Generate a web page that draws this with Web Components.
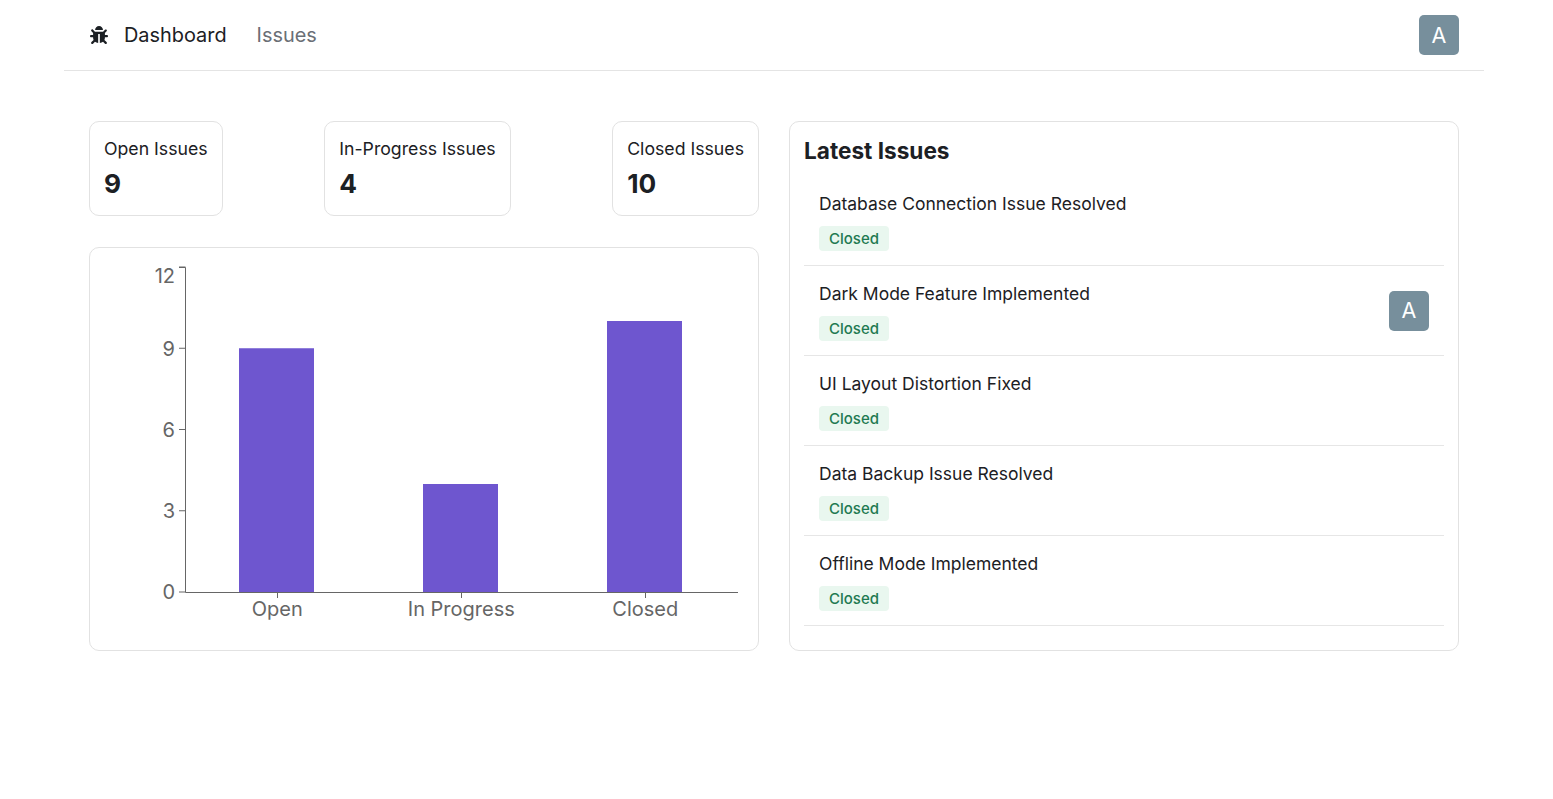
<!DOCTYPE html>
<html lang="en">
<head>
<meta charset="utf-8">
<title>Issue Tracker</title>
<style>
  html, body { margin: 0; background: #fff; }
  body { font-family: Inter, "Liberation Sans", sans-serif; color: #1c2024; }
</style>
</head>
<body>
<issue-nav></issue-nav>
<issue-dashboard>
  <stat-row slot="left">
    <stat-card label="Open Issues" value="9"></stat-card>
    <stat-card label="In-Progress Issues" value="4"></stat-card>
    <stat-card label="Closed Issues" value="10"></stat-card>
  </stat-row>
  <issue-chart slot="left"></issue-chart>
  <latest-issues slot="right">
    <issue-row title="Database Connection Issue Resolved"></issue-row>
    <issue-row title="Dark Mode Feature Implemented" assigned></issue-row>
    <issue-row title="UI Layout Distortion Fixed"></issue-row>
    <issue-row title="Data Backup Issue Resolved"></issue-row>
    <issue-row title="Offline Mode Implemented"></issue-row>
  </latest-issues>
</issue-dashboard>

<script>
// Small helper so every element gets an open shadow root from a string
function shadow(el, html) {
  el.attachShadow({ mode: 'open' }).innerHTML = html;
}

class UserAvatar extends HTMLElement {
  connectedCallback() {
    shadow(this, `
      <style>
        :host {
          display: flex; align-items: center; justify-content: center;
          box-sizing: border-box; padding-top: 1px;
          width: 40px; height: 40px; flex: none;
          border-radius: 5px;
          background: #778f9c; color: #fff;
          font-size: 21.5px; line-height: 1;
        }
      </style>
      <span>${this.getAttribute('letter') || 'A'}</span>`);
  }
}

class IssueNav extends HTMLElement {
  connectedCallback() {
    shadow(this, `
      <style>
        :host {
          display: flex; align-items: center; justify-content: space-between;
          box-sizing: border-box;
          width: 1420px; height: 71px;
          margin-left: 64px; padding: 0 25px;
          border-bottom: 1px solid #e4e4e4;
        }
        .links { display: flex; align-items: center; }
        svg { width: 18px; height: 18px; color: #1c2024; margin: 0 16px 0 1px; }
        a { font-size: 19.9px; line-height: 28px; text-decoration: none; color: #1c2024; }
        a + a { margin-left: 30px; color: #6b6f76; }
      </style>
      <div class="links">
        <svg viewBox="0 0 512 512" fill="currentColor"><path d="M511.988 288.9c-.478 17.43-15.217 31.1-32.653 31.1H424v16c0 21.864-4.882 42.584-13.6 61.145l60.228 60.228c12.496 12.497 12.496 32.758 0 45.255-12.498 12.497-32.759 12.496-45.256 0l-54.736-54.736C345.886 467.965 314.351 480 280 480V236c0-6.627-5.373-12-12-12h-24c-6.627 0-12 5.373-12 12v244c-34.351 0-65.886-12.035-90.636-32.108l-54.736 54.736c-12.498 12.497-32.759 12.496-45.256 0-12.496-12.497-12.496-32.758 0-45.255l60.228-60.228C92.882 378.584 88 357.864 88 336v-16H32.666C15.23 320 .491 306.33.013 288.9-.484 270.816 14.028 256 32 256h56v-58.745l-46.628-46.628c-12.496-12.497-12.496-32.758 0-45.255 12.498-12.497 32.758-12.497 45.256 0L141.255 160h229.489l54.627-54.627c12.498-12.497 32.758-12.497 45.256 0 12.496 12.497 12.496 32.758 0 45.255L424 197.255V256h56c17.972 0 32.484 14.816 31.988 32.9zM257 0c-61.856 0-112 50.144-112 112h224C369 50.144 318.856 0 257 0z"/></svg>
        <a href="#">Dashboard</a>
        <a href="#">Issues</a>
      </div>
      <user-avatar></user-avatar>`);
  }
}

class IssueDashboard extends HTMLElement {
  connectedCallback() {
    shadow(this, `
      <style>
        :host {
          display: grid; grid-template-columns: 670px 670px; column-gap: 30px;
          width: 1370px; margin: 50px 0 0 89px;
        }
        .col { display: flex; flex-direction: column; gap: 31px; }
      </style>
      <div class="col"><slot name="left"></slot></div>
      <div class="col"><slot name="right"></slot></div>`);
  }
}

class StatRow extends HTMLElement {
  connectedCallback() {
    shadow(this, `
      <style>:host { display: flex; justify-content: space-between; }</style>
      <slot></slot>`);
  }
}

class StatCard extends HTMLElement {
  connectedCallback() {
    shadow(this, `
      <style>
        :host {
          display: block; box-sizing: border-box; height: 95px;
          padding: 15px 14px; border: 1px solid #e2e2e2; border-radius: 10px;
        }
        .label { font-size: 17.7px; line-height: 24px; }
        .value { font-size: 26.25px; line-height: 31px; font-weight: 700; margin-top: 7px; }
      </style>
      <div class="label">${this.getAttribute('label')}</div>
      <div class="value">${this.getAttribute('value')}</div>`);
  }
}

class IssueChart extends HTMLElement {
  connectedCallback() {
    // viewBox uses the page's own coordinates, it made reading the axis easier
    const yTicks = [[12, 267, 283], [9, 348.25, 355.5], [6, 429.5, 437], [3, 510.75, 518], [0, 592, 599]];
    const bars = [
      { name: 'Open', x: 239, top: 348.25 },
      { name: 'In Progress', x: 423, top: 484 },
      { name: 'Closed', x: 607, top: 321 },
    ];
    const ys = yTicks.map(([v, y, base]) => `
      <line x1="179" x2="185.5" y1="${y}" y2="${y}" />
      <text x="175" y="${base}" text-anchor="end">${v}</text>`).join('');
    const xs = bars.map(b => `
      <rect x="${b.x}" y="${b.top}" width="75" height="${592 - b.top}" fill="#6e56cf" />
      <line x1="${b.x + 38.5}" x2="${b.x + 38.5}" y1="592" y2="598" />
      <text x="${b.x + 38.3}" y="616" text-anchor="middle">${b.name}</text>`).join('');
    shadow(this, `
      <style>
        :host {
          display: block; box-sizing: border-box; height: 404px;
          border: 1px solid #e2e2e2; border-radius: 10px;
        }
        svg { display: block; width: 668px; height: 402px; }
        line, path { stroke: #666; stroke-width: 1; fill: none; }
        text { fill: #666; font-size: 20px; font-family: Inter, sans-serif; }
      </style>
      <svg viewBox="90 248 668 402">
        ${xs}
        <path d="M179 267.5H185.5V592.5H738" />
        ${ys}
      </svg>`);
  }
}

class LatestIssues extends HTMLElement {
  connectedCallback() {
    shadow(this, `
      <style>
        :host {
          display: block; box-sizing: border-box; height: 530px;
          padding: 15px 14px; border: 1px solid #e2e2e2; border-radius: 10px;
        }
        h2 { margin: 0 0 11px; font-size: 22.6px; line-height: 28px; font-weight: 700; }
      </style>
      <h2>Latest Issues</h2>
      <slot></slot>`);
  }
}

class IssueRow extends HTMLElement {
  connectedCallback() {
    shadow(this, `
      <style>
        :host {
          display: flex; align-items: center; justify-content: space-between;
          box-sizing: border-box; height: 90px;
          padding: 0 15px; border-bottom: 1px solid #e6e6e6;
        }
        .title { font-size: 17.5px; line-height: 26px; margin-bottom: 9px; }
      </style>
      <div>
        <div class="title">${this.getAttribute('title')}</div>
        <status-badge>Closed</status-badge>
      </div>
      ${this.hasAttribute('assigned') ? '<user-avatar></user-avatar>' : ''}`);
  }
}

class StatusBadge extends HTMLElement {
  connectedCallback() {
    shadow(this, `
      <style>
        :host {
          display: inline-block; box-sizing: border-box; height: 25px;
          padding: 0 10px; border-radius: 4px;
          background: #e9f7ef; color: #1f7a52;
          font-size: 15px; line-height: 25px; font-weight: 500;
        }
      </style>
      <slot></slot>`);
  }
}

customElements.define('user-avatar', UserAvatar);
customElements.define('issue-nav', IssueNav);
customElements.define('issue-dashboard', IssueDashboard);
customElements.define('stat-row', StatRow);
customElements.define('stat-card', StatCard);
customElements.define('issue-chart', IssueChart);
customElements.define('latest-issues', LatestIssues);
customElements.define('issue-row', IssueRow);
customElements.define('status-badge', StatusBadge);
</script>
</body>
</html>
